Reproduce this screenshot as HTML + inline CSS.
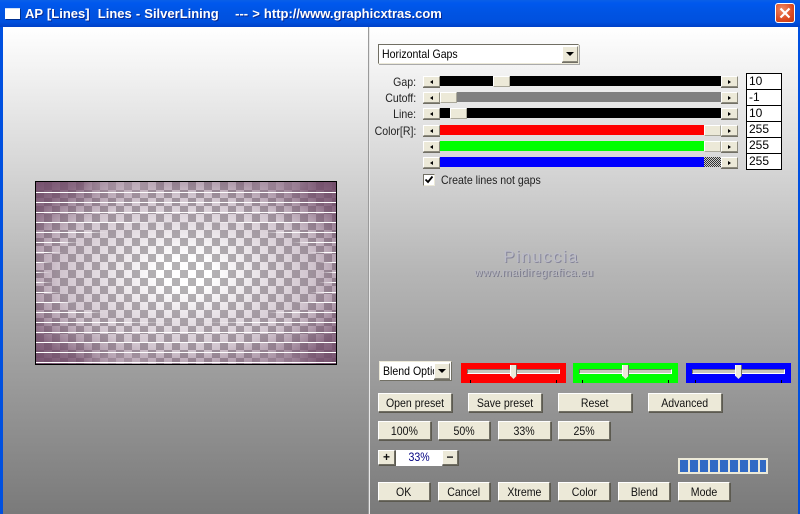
<!DOCTYPE html>
<html><head><meta charset="utf-8">
<style>
html,body{margin:0;padding:0;background:#808080}
#w{position:relative;width:800px;height:514px;overflow:hidden;font:12px "Liberation Sans",sans-serif;color:#000;background:linear-gradient(#fff 27px,#d2d2d2 180px,#b6b6b6 270px,#7a7a7a 514px)}
#w div{position:absolute;box-sizing:border-box}
.s{display:inline-block;transform:scaleX(.88);white-space:nowrap}
.b{background:#ece9d8;border:1px solid;border-color:#fff #716f64 #716f64 #fff;box-shadow:1px 1px 0 #5c5a50;text-align:center;line-height:19px;font-size:12px;color:#111}
.ar{background:#ece9d8;border:1px solid;border-color:#fff #8d8b7e #8d8b7e #fff;box-shadow:0 1px 0 #716f64}
.ar i{position:absolute;left:6px;top:3px;width:0;height:0;border-top:2px solid transparent;border-bottom:2px solid transparent}
.l i{border-right:3px solid #000}
.r i{border-left:3px solid #000}
.th{background:#ece9d8;border:1px solid;border-color:#fff #aaa89a #aaa89a #fff}
.t{height:10px;left:440px;width:281px}
.lb{left:340px;width:76px;text-align:right;font-size:12px;line-height:14px;color:#222}
.lb .s{transform-origin:right center}
.in{left:746px;width:36px;height:17px;background:#fff;border:1px solid #000;padding-left:2px;font-size:12px;line-height:14px}
.p{top:363px;height:20px;width:105px}
.tr{top:6px;left:6px;width:93px;height:5px;background:#c8c6bc;border:1px solid;border-color:#716f64 #fff #fff #716f64}
.kn{top:2px;left:49px;width:7px;height:14px;background:#ece9d8;border-left:1px solid #fff;border-right:1px solid #716f64;clip-path:polygon(0 0,100% 0,100% 75%,50% 100%,0 75%)}
.tk{top:17px;width:1px;height:3px;background:#000}
.seg{top:2px;width:8px;height:12px;background:#316ac5}
</style></head><body>
<div id="w">
<!-- title bar -->
<div style="left:0;top:0;width:800px;height:27px;background:linear-gradient(#0a5fe8 0,#0058ee 3px,#0054e3 12px,#0050de 22px,#0040c8 27px)"></div>
<div style="left:5px;top:8px;width:15px;height:11px;background:#fff;border-top:1px solid #cfe0f8;box-shadow:1px 1px 0 #003090"></div>
<div style="left:25px;top:6px;width:700px;font:bold 13px/16px 'Liberation Sans',sans-serif;color:#fff;white-space:pre;text-shadow:1px 1px 0 #0a2a90;word-spacing:.5px">AP [Lines]  Lines - SilverLining    --- &gt; http://www.graphicxtras.com</div>
<div style="left:775px;top:3px;width:20px;height:20px;border:1px solid #fff;border-radius:3px;background:radial-gradient(circle at 35% 30%,#ee8a66,#dc4a22 60%,#c23a12)">
<svg width="18" height="18" style="position:absolute;left:0;top:0"><path d="M4.5 4.5L13.5 13.5M13.5 4.5L4.5 13.5" stroke="#fff" stroke-width="2.2"/></svg></div>
<!-- borders -->
<div style="left:0;top:27px;width:3px;height:487px;background:#0050e0"></div>
<div style="left:798px;top:27px;width:2px;height:487px;background:#0050e0"></div>
<div style="left:369px;top:27px;width:1px;height:487px;background:#e8e8e8;box-shadow:-1px 0 0 #9a9a9a"></div>

<!-- preview -->
<div style="left:35px;top:181px;width:302px;height:184px;border:1px solid #000;overflow:hidden;background:repeating-conic-gradient(#b4b2b4 0 25%,#fff 0 50%) 0 0/16px 16px">
 <div style="left:0;top:0;width:300px;height:182px;background:radial-gradient(ellipse farthest-corner at 150px 91px,rgba(112,74,104,0) 12%,rgba(112,74,104,.16) 36%,rgba(112,74,104,.32) 60%,rgba(112,74,104,.52) 72%,rgba(112,74,104,.82) 85%,rgba(112,74,104,.97) 100%)"></div>
 <div style="left:50px;top:-10px;width:70px;height:22px;border-radius:50%;background:rgba(225,215,222,.3);filter:blur(6px)"></div>
 <div style="left:215px;top:-10px;width:60px;height:20px;border-radius:50%;background:rgba(225,215,222,.25);filter:blur(6px)"></div>
 <div style="left:50px;top:172px;width:70px;height:22px;border-radius:50%;background:rgba(225,215,222,.3);filter:blur(6px)"></div>
 <div style="left:215px;top:172px;width:60px;height:22px;border-radius:50%;background:rgba(225,215,222,.25);filter:blur(6px)"></div>
 <div style="left:0;top:10px;width:300px;height:171px;background:linear-gradient(#fff 0 1px,transparent 1px) 0 0/100% 10px;-webkit-mask-image:radial-gradient(ellipse 150px 55px at 150px 81px,transparent 90%,#000 100%);mask-image:radial-gradient(ellipse 150px 55px at 150px 81px,transparent 90%,#000 100%)"></div>
</div>

<!-- dropdown -->
<div style="left:378px;top:44px;width:201px;height:20px;background:#fff;border:1px solid;border-color:#716f64 #ece9d8 #ece9d8 #716f64;box-shadow:1px 1px 0 #aaa;padding-left:3px;line-height:18px;font-size:12px"><span class="s" style="transform-origin:left center">Horizontal Gaps</span>
 <div class="ar" style="left:183px;top:1px;width:16px;height:16px"><i style="position:absolute;left:3px;top:5px;width:0;height:0;border-left:4px solid transparent;border-right:4px solid transparent;border-top:4px solid #000"></i></div></div>

<!-- labels -->
<div class="lb" style="top:75px"><span class="s">Gap:</span></div>
<div class="lb" style="top:91px"><span class="s">Cutoff:</span></div>
<div class="lb" style="top:107px"><span class="s">Line:</span></div>
<div class="lb" style="top:124px"><span class="s">Color[R]:</span></div>

<!-- sliders -->
<div class="ar l" style="left:423px;top:76px;width:17px;height:11px"><i></i></div>
<div class="t" style="top:76px;background:#000"></div>
<div class="th" style="left:493px;top:76px;width:17px;height:11px"></div>
<div class="ar r" style="left:721px;top:76px;width:17px;height:11px"><i></i></div>

<div class="ar l" style="left:423px;top:92px;width:17px;height:11px"><i></i></div>
<div class="t" style="top:92px;background:#808080"></div>
<div class="th" style="left:440px;top:92px;width:17px;height:11px"></div>
<div class="ar r" style="left:721px;top:92px;width:17px;height:11px"><i></i></div>

<div class="ar l" style="left:423px;top:108px;width:17px;height:11px"><i></i></div>
<div class="t" style="top:108px;background:#000"></div>
<div class="th" style="left:450px;top:108px;width:17px;height:11px"></div>
<div class="ar r" style="left:721px;top:108px;width:17px;height:11px"><i></i></div>

<div class="ar l" style="left:423px;top:125px;width:17px;height:11px"><i></i></div>
<div class="t" style="top:125px;width:264px;background:#f00"></div>
<div class="th" style="left:704px;top:125px;width:17px;height:11px"></div>
<div class="ar r" style="left:721px;top:125px;width:17px;height:11px"><i></i></div>

<div class="ar l" style="left:423px;top:141px;width:17px;height:11px"><i></i></div>
<div class="t" style="top:141px;width:264px;background:#0f0"></div>
<div class="th" style="left:704px;top:141px;width:17px;height:11px"></div>
<div class="ar r" style="left:721px;top:141px;width:17px;height:11px"><i></i></div>

<div class="ar l" style="left:423px;top:157px;width:17px;height:11px"><i></i></div>
<div class="t" style="top:157px;width:264px;background:#00f"></div>
<div style="left:704px;top:157px;width:17px;height:10px;background:repeating-conic-gradient(#333 0 25%,#ccc 0 50%) 0 0/2px 2px"></div>
<div class="ar r" style="left:721px;top:157px;width:17px;height:11px"><i></i></div>

<!-- inputs -->
<div class="in" style="top:73px">10</div>
<div class="in" style="top:89px">-1</div>
<div class="in" style="top:105px">10</div>
<div class="in" style="top:121px">255</div>
<div class="in" style="top:137px">255</div>
<div class="in" style="top:153px">255</div>

<!-- checkbox -->
<div style="left:423px;top:174px;width:12px;height:12px;background:#fff;border:1px solid;border-color:#716f64 #ece9d8 #ece9d8 #716f64"><svg width="10" height="10" style="position:absolute;left:0;top:0"><path d="M1.5 4.5L4 7L8.5 1.5" fill="none" stroke="#000" stroke-width="1.8"/></svg></div>
<div style="left:441px;top:173px;font-size:12px;line-height:14px;white-space:nowrap;color:#222"><span class="s" style="transform-origin:left center">Create lines not gaps</span></div>

<!-- watermark -->
<div style="left:476px;top:248px;width:130px;text-align:center;font-size:17px;line-height:18px;letter-spacing:1.4px;color:#bcbcc8;text-shadow:1px 1px 0 #85859a">Pinuccia</div>
<div style="left:460px;top:267px;width:148px;text-align:center;font-size:11px;line-height:13px;letter-spacing:.4px;color:#b8b8c2;text-shadow:1px 1px 0 #77778a">www.maidiregrafica.eu</div>

<!-- blend -->
<div style="left:379px;top:361px;width:73px;height:20px;background:#fff;border:1px solid;border-color:#ece9d8 #716f64 #716f64 #ece9d8">
 <div style="left:3px;top:0;width:51px;height:18px;line-height:18px;font-size:12px;overflow:hidden;white-space:nowrap"><span class="s" style="transform-origin:left center">Blend Options</span></div>
 <div class="ar" style="left:54px;top:1px;width:16px;height:16px"><i style="position:absolute;left:3px;top:5px;width:0;height:0;border-left:4px solid transparent;border-right:4px solid transparent;border-top:4px solid #000"></i></div></div>

<div class="p" style="left:461px;background:#f00"><div class="tr"></div><div class="kn"></div><div class="tk" style="left:9px"></div><div class="tk" style="left:95px"></div></div>
<div class="p" style="left:573px;background:#0f0"><div class="tr"></div><div class="kn"></div><div class="tk" style="left:9px"></div><div class="tk" style="left:95px"></div></div>
<div class="p" style="left:686px;background:#00f"><div class="tr"></div><div class="kn"></div><div class="tk" style="left:9px"></div><div class="tk" style="left:95px"></div></div>

<!-- buttons -->
<div class="b" style="left:378px;top:393px;width:74px;height:19px"><span class="s">Open preset</span></div>
<div class="b" style="left:468px;top:393px;width:74px;height:19px"><span class="s">Save preset</span></div>
<div class="b" style="left:558px;top:393px;width:74px;height:19px"><span class="s">Reset</span></div>
<div class="b" style="left:648px;top:393px;width:74px;height:19px"><span class="s">Advanced</span></div>

<div class="b" style="left:378px;top:421px;width:53px;height:19px"><span class="s">100%</span></div>
<div class="b" style="left:438px;top:421px;width:52px;height:19px"><span class="s">50%</span></div>
<div class="b" style="left:498px;top:421px;width:53px;height:19px"><span class="s">33%</span></div>
<div class="b" style="left:558px;top:421px;width:52px;height:19px"><span class="s">25%</span></div>

<div class="b" style="left:378px;top:450px;width:17px;height:15px;line-height:13px;font-weight:bold">+</div>
<div style="left:396px;top:450px;width:46px;height:16px;background:#fff;text-align:center;color:#000080;font-size:12px;line-height:15px"><span class="s">33%</span></div>
<div class="b" style="left:442px;top:450px;width:16px;height:15px;line-height:13px;font-weight:bold">&#8722;</div>

<!-- progress -->
<div style="left:678px;top:458px;width:90px;height:16px;background:#ece9d8">
 <div class="seg" style="left:2px"></div><div class="seg" style="left:12px"></div><div class="seg" style="left:22px"></div><div class="seg" style="left:32px"></div><div class="seg" style="left:42px"></div><div class="seg" style="left:52px"></div><div class="seg" style="left:62px"></div><div class="seg" style="left:72px"></div><div class="seg" style="left:82px;width:6px"></div>
</div>

<div class="b" style="left:378px;top:482px;width:52px;height:19px"><span class="s">OK</span></div>
<div class="b" style="left:438px;top:482px;width:52px;height:19px"><span class="s">Cancel</span></div>
<div class="b" style="left:498px;top:482px;width:52px;height:19px"><span class="s">Xtreme</span></div>
<div class="b" style="left:558px;top:482px;width:52px;height:19px"><span class="s">Color</span></div>
<div class="b" style="left:618px;top:482px;width:52px;height:19px"><span class="s">Blend</span></div>
<div class="b" style="left:678px;top:482px;width:52px;height:19px"><span class="s">Mode</span></div>
</div>
</body></html>
